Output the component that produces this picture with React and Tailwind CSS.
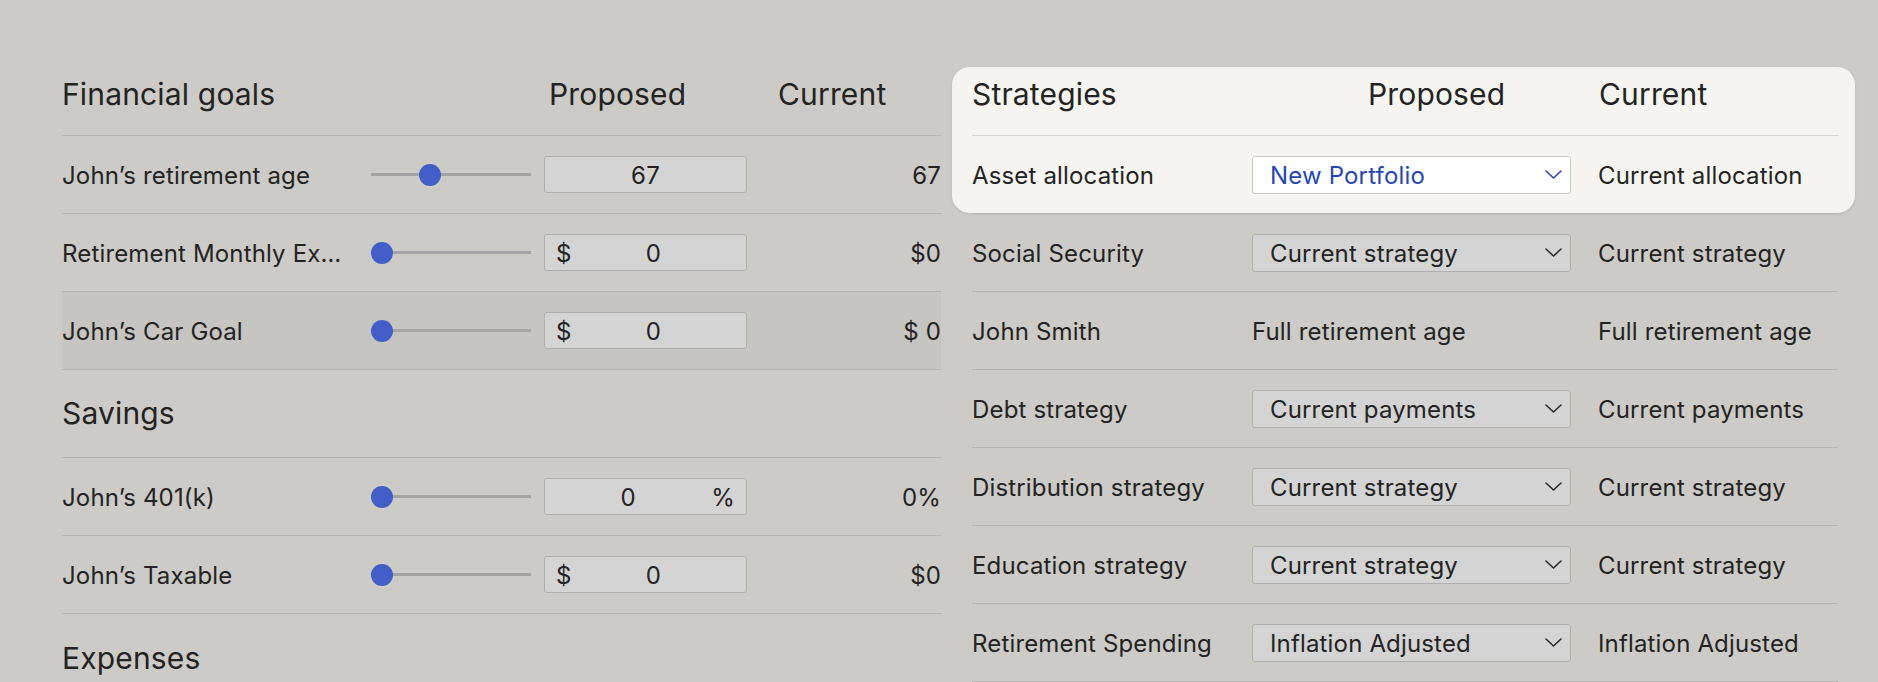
import React from "react";

function Chevron({ blue }) {
  return (
    <svg width="17" height="9" viewBox="0 0 17 9" fill="none" className="shrink-0">
      <polyline points="1,1 8.5,8 16,1" stroke={blue ? "#2746b3" : "#2a2a2a"} strokeWidth="1.6" strokeLinejoin="round" strokeLinecap="round" />
    </svg>
  );
}

function Slider({ pct }) {
  return (
    <div className="relative flex h-[22px] w-[160px] shrink-0 items-center">
      <div className="h-[3px] w-full bg-[#a4a4a4]" />
      <div
        className="absolute top-0 h-[22px] w-[22px] rounded-full bg-[#435ec6]"
        style={{ left: `${pct * 138}px` }}
      />
    </div>
  );
}

function NumInput({ value, prefix, suffix }) {
  return (
    <div className="ml-[13px] flex h-[37px] w-[203px] shrink-0 items-center rounded-[3px] border border-[#afafaf] bg-[#d4d4d4] px-[11px] pt-[3px] text-[24px]">
      {prefix && <span>{prefix}</span>}
      <span className={suffix ? "flex-1 -ml-[11px] text-center" : "flex-1 text-center"}>{value}</span>
      {suffix && <span>{suffix}</span>}
    </div>
  );
}

function GoalRow({ label, pct, value, prefix, suffix, current, highlight }) {
  return (
    <div className={`flex h-[78px] items-center border-b border-[#b5b4b0] ${highlight ? "bg-[#c6c5c1]" : ""}`}>
      <div className="w-[309px] shrink-0 truncate pt-[3px] text-[24px]">{label}</div>
      <Slider pct={pct} />
      <NumInput value={value} prefix={prefix} suffix={suffix} />
      <div className="flex-1 pt-[3px] text-right text-[24px]">{current}</div>
    </div>
  );
}

function SectionHeading({ title }) {
  return (
    <div className="flex h-[88px] items-center border-b border-[#b5b4b0] text-[30px]">{title}</div>
  );
}

function Select({ value, white }) {
  return (
    <div
      className={`flex h-[38px] w-[319px] shrink-0 items-center justify-between rounded-[3px] border pl-[17px] pr-[8px] text-[24px] ${
        white ? "border-[#c9c9c9] bg-white text-[#2746b3]" : "border-[#afafaf] bg-[#d4d4d4]"
      }`}
    >
      <span className="pt-[3px]">{value}</span>
      <Chevron blue={white} />
    </div>
  );
}

function StrategyRow({ label, proposed, current, white, plain, noBorder }) {
  return (
    <div className={`flex items-center text-[24px] ${noBorder ? "h-[77px]" : "h-[78px] border-b border-[#b5b4b0]"}`}>
      <div className="w-[280px] shrink-0 pt-[3px]">{label}</div>
      <div className="w-[346px] shrink-0">
        {plain ? <div className="pt-[3px]">{proposed}</div> : <Select value={proposed} white={white} />}
      </div>
      <div className="flex-1 pt-[3px]">{current}</div>
    </div>
  );
}

export default function App() {
  return (
    <div
      className="min-h-screen overflow-hidden bg-[#cccbc7] text-[#232323] tracking-[0.01em]"
      style={{ fontFamily: "Inter, 'Noto Sans', sans-serif" }}
    >
      <div className="flex h-[682px] pl-[62px] pt-[67px]">
        {/* Left: Financial goals */}
        <div className="w-[879px] shrink-0">
          <div className="flex h-[69px] items-start border-b border-[#b5b4b0] pt-[5px] text-[30px]">
            <div className="w-[487px] shrink-0">Financial goals</div>
            <div className="w-[229px] shrink-0">Proposed</div>
            <div>Current</div>
          </div>
          <GoalRow label="John’s retirement age" pct={0.35} value="67" current="67" />
          <GoalRow label="Retirement Monthly Ex…" pct={0} value="0" prefix="$" current="$0" />
          <GoalRow label="John’s Car Goal" pct={0} value="0" prefix="$" current="$ 0" highlight />
          <SectionHeading title="Savings" />
          <GoalRow label="John’s 401(k)" pct={0} value="0" suffix="%" current="0%" />
          <GoalRow label="John’s Taxable" pct={0} value="0" prefix="$" current="$0" />
          <div className="flex h-[88px] items-center text-[30px]">Expenses</div>
        </div>

        {/* Right: Strategies */}
        <div className="ml-[31px] w-[866px] shrink-0">
          <div className="-ml-[20px] -mr-[17px] rounded-[18px] bg-[#f5f4f0] pl-[20px] pr-[17px] shadow-[0_1px_3px_rgba(0,0,0,0.10)]">
            <div className="flex h-[69px] items-start border-b border-[#d6d5d1] pt-[5px] text-[30px]">
              <div className="w-[396px] shrink-0">Strategies</div>
              <div className="w-[231px] shrink-0">Proposed</div>
              <div>Current</div>
            </div>
            <StrategyRow label="Asset allocation" proposed="New Portfolio" current="Current allocation" white noBorder />
          </div>
          <div className="h-px bg-[#b5b4b0]" />
          <StrategyRow label="Social Security" proposed="Current strategy" current="Current strategy" />
          <StrategyRow label="John Smith" proposed="Full retirement age" current="Full retirement age" plain />
          <StrategyRow label="Debt strategy" proposed="Current payments" current="Current payments" />
          <StrategyRow label="Distribution strategy" proposed="Current strategy" current="Current strategy" />
          <StrategyRow label="Education strategy" proposed="Current strategy" current="Current strategy" />
          <StrategyRow label="Retirement Spending" proposed="Inflation Adjusted" current="Inflation Adjusted" />
        </div>
      </div>
    </div>
  );
}
